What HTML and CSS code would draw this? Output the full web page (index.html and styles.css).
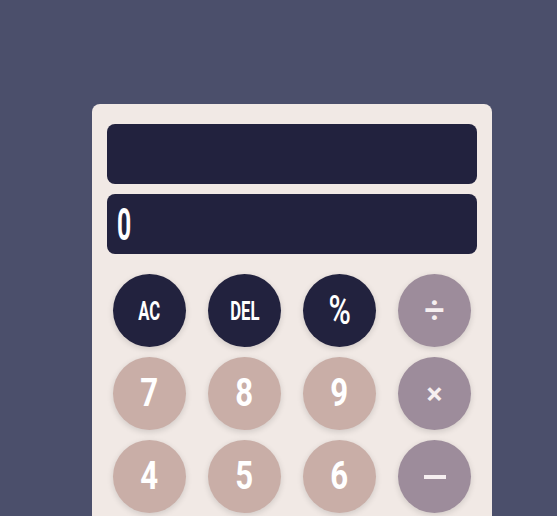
FILE: index.html
```html
<!DOCTYPE html>
<html>
<head>
<meta charset="utf-8">
<link rel="stylesheet" href="styles.css">
</head>
<body>
<div class="calc">
  <div class="display previous"></div>
  <div class="display current"><span class="glyph">0</span></div>
  <div class="keys">
    <button class="key dark small"><span class="glyph">AC</span></button>
    <button class="key dark small"><span class="glyph">DEL</span></button>
    <button class="key dark pct"><span class="glyph">%</span></button>
    <button class="key op div"><span class="glyph">÷</span></button>
    <button class="key num"><span class="glyph">7</span></button>
    <button class="key num"><span class="glyph">8</span></button>
    <button class="key num"><span class="glyph">9</span></button>
    <button class="key op mul"><span class="glyph">×</span></button>
    <button class="key num"><span class="glyph">4</span></button>
    <button class="key num"><span class="glyph">5</span></button>
    <button class="key num"><span class="glyph">6</span></button>
    <button class="key op sub"><span class="bar"></span></button>
  </div>
</div>
</body>
</html>
```
FILE: styles.css
```css
html, body {
  margin: 0;
  padding: 0;
  height: 100%;
  overflow: hidden;
}
body {
  background: #4b4f6b;
  font-family: Roboto, "Liberation Sans", sans-serif;
}
.calc {
  margin: 104px 0 0 92px;
  width: 370px;
  padding: 20px 15px;
  background: #f1e9e5;
  border-radius: 8px;
  display: flex;
  flex-direction: column;
  gap: 10px;
}
.display {
  height: 60px;
  background: #22223e;
  border-radius: 8px;
  color: #ffffff;
  display: flex;
  align-items: center;
  padding: 0 10px;
  font-size: 45px;
  font-weight: 700;
}
.display .glyph {
  display: inline-block;
  transform: scaleX(0.55);
  transform-origin: left center;
  line-height: 1;
}
.keys {
  display: grid;
  grid-template-columns: repeat(4, 73px);
  column-gap: 22px;
  row-gap: 10px;
  padding: 10px 6px 0;
}
.key {
  width: 73px;
  height: 73px;
  border-radius: 50%;
  border: none;
  color: #ffffff;
  font-family: inherit;
  font-weight: 700;
  font-size: 39px;
  padding: 0;
  display: flex;
  align-items: center;
  justify-content: center;
  box-shadow: 0 2px 6px rgba(0, 0, 0, 0.14);
}
.key .glyph {
  display: inline-block;
  transform: scaleX(0.8);
  line-height: 1;
}
.dark { background: #22223e; }
.small { font-size: 26px; }
.small .glyph { transform: scaleX(0.64); }
.pct { font-size: 40px; font-weight: 500; }
.pct .glyph { transform: scaleX(0.76); }
.num { background: #c9aea7; }
.op { background: #9d8c9b; color: #f6eff0; }
.div { font-size: 36px; font-weight: 500; }
.div .glyph { transform: scaleX(1); }
.mul { font-size: 30px; font-weight: 700; }
.mul .glyph { transform: scaleX(1); }
.bar {
  display: block;
  width: 22px;
  height: 4px;
  background: #f6eff0;
}
```
